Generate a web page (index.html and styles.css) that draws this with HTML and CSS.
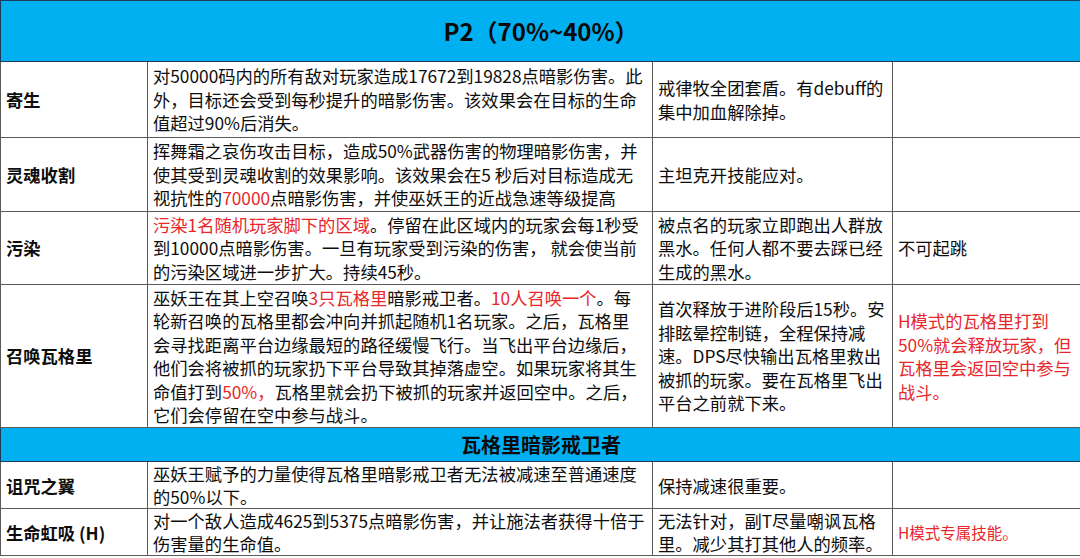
FILE: index.html
```html
<!DOCTYPE html>
<html lang="zh-CN">
<head>
<meta charset="utf-8">
<title>P2</title>
<link rel="stylesheet" href="styles.css">
</head>
<body>
<table class="sheet">
  <colgroup>
    <col class="c1"><col class="c2"><col class="c3"><col class="c4">
  </colgroup>
  <tr class="r-title"><td colspan="4" class="head">P2（70%~40%）</td></tr>
  <tr class="r1">
    <td class="lab">寄生</td>
    <td>对50000码内的所有敌对玩家造成17672到19828点暗影伤害。此<br>外，目标还会受到每秒提升的暗影伤害。该效果会在目标的生命<br>值超过90%后消失。</td>
    <td>戒律牧全团套盾。有debuff的<br>集中加血解除掉。</td>
    <td></td>
  </tr>
  <tr class="r2">
    <td class="lab">灵魂收割</td>
    <td>挥舞霜之哀伤攻击目标，造成50%武器伤害的物理暗影伤害，并<br>使其受到灵魂收割的效果影响。该效果会在5 秒后对目标造成无<br>视抗性的<span class="red">70000</span>点暗影伤害，并使巫妖王的近战急速等级提高</td>
    <td>主坦克开技能应对。</td>
    <td></td>
  </tr>
  <tr class="r3">
    <td class="lab">污染</td>
    <td><span class="red">污染1名随机玩家脚下的区域</span>。停留在此区域内的玩家会每1秒受<br>到10000点暗影伤害。一旦有玩家受到污染的伤害， 就会使当前<br>的污染区域进一步扩大。持续45秒。</td>
    <td>被点名的玩家立即跑出人群放<br>黑水。任何人都不要去踩已经<br>生成的黑水。</td>
    <td>不可起跳</td>
  </tr>
  <tr class="r4">
    <td class="lab">召唤瓦格里</td>
    <td>巫妖王在其上空召唤<span class="red">3只瓦格里</span>暗影戒卫者。<span class="red">10人召唤一个</span>。每<br>轮新召唤的瓦格里都会冲向并抓起随机1名玩家。之后，瓦格里<br>会寻找距离平台边缘最短的路径缓慢飞行。当飞出平台边缘后，<br>他们会将被抓的玩家扔下平台导致其掉落虚空。如果玩家将其生<br>命值打到<span class="red">50%，</span>瓦格里就会扔下被抓的玩家并返回空中。之后，<br>它们会停留在空中参与战斗。</td>
    <td>首次释放于进阶段后15秒。安<br>排眩晕控制链，全程保持减<br>速。DPS尽快输出瓦格里救出<br>被抓的玩家。要在瓦格里飞出<br>平台之前就下来。</td>
    <td class="red">H模式的瓦格里打到<br>50%就会释放玩家，但<br>瓦格里会返回空中参与<br>战斗。</td>
  </tr>
  <tr class="r-sub"><td colspan="4" class="sub">瓦格里暗影戒卫者</td></tr>
  <tr class="r5">
    <td class="lab">诅咒之翼</td>
    <td>巫妖王赋予的力量使得瓦格里暗影戒卫者无法被减速至普通速度<br>的50%以下。</td>
    <td>保持减速很重要。</td>
    <td></td>
  </tr>
  <tr class="r6">
    <td class="lab">生命虹吸 (H)</td>
    <td>对一个敌人造成4625到5375点暗影伤害，并让施法者获得十倍于<br>伤害量的生命值。</td>
    <td>无法针对，副T尽量嘲讽瓦格<br>里。减少其打其他人的频率。</td>
    <td class="red small">H模式专属技能。</td>
  </tr>
</table>
</body>
</html>
```

FILE: styles.css
```css
html, body {
  margin: 0;
  padding: 0;
  background: #ffffff;
}

.sheet {
  width: 1080px;
  border-collapse: collapse;
  table-layout: fixed;
  font-family: "Noto Sans CJK SC", "Noto Sans", sans-serif;
  font-size: 17.3px;
  line-height: 23.5px;
  color: #0d0d0d;
}

.c1 { width: 147px; }
.c2 { width: 505px; }
.c3 { width: 240px; }
.c4 { width: 188px; }

.sheet td {
  border: 1px solid #5a5a5a;
  padding: 0 4px 0 5px;
  vertical-align: middle;
  white-space: nowrap;
  overflow: hidden;
}

.head {
  background: #00b0f0;
  border: 1px solid #1d3a57 !important;
  text-align: center;
  font-weight: 700;
  font-size: 24px;
  color: #0a0a0a;
}

.sub {
  background: #00b0f0;
  border: 1px solid #1d3a57 !important;
  text-align: center;
  font-weight: 700;
  font-size: 20px;
  color: #0a0a0a;
}

.lab {
  font-weight: 700;
}

.red { color: #e8272b; }
.small { font-size: 15.5px; }

.r-title { height: 61px; }
.r1 { height: 76px; }
.r2 { height: 74px; }
.r3 { height: 73px; }
.r4 { height: 143px; }
.r-sub { height: 34px; }
.r5 { height: 47px; line-height: 23px; }
.r6 { height: 47px; line-height: 23px; }
```
